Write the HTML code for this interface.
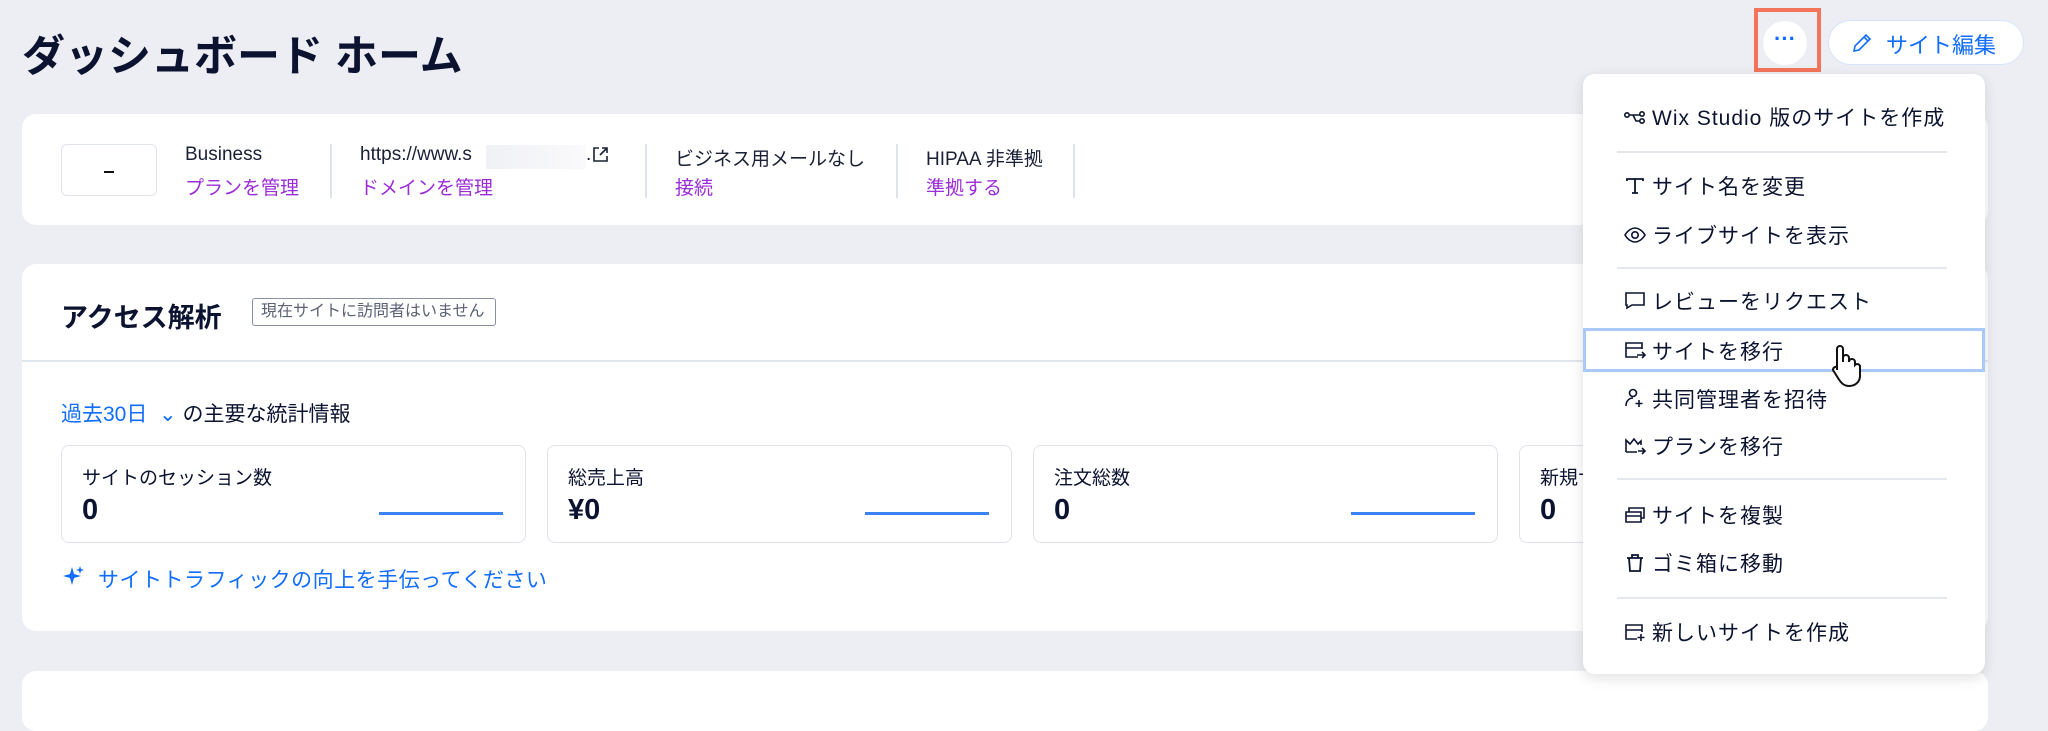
<!DOCTYPE html>
<html><head><meta charset="utf-8"><style>
*{margin:0;padding:0;box-sizing:border-box}
body{width:2048px;height:696px;background:#eceef3;font-family:"Liberation Sans","Noto Sans CJK JP",sans-serif;color:#0b1330;position:relative;overflow:hidden}
.a{position:absolute}
.card{position:absolute;background:#fff;border-radius:14px}
.lnk{color:#9b2dd8;font-size:19px}
.sm{font-size:19px;color:#1a2035}
.sep{position:absolute;top:144px;width:2px;height:54px;background:#dfe3ea}
.stat{position:absolute;top:445px;height:98px;border:1px solid #dfe3ea;border-radius:8px;background:#fff}
.stat .l{position:absolute;left:20px;top:17px;font-size:19px}
.stat .v{position:absolute;left:20px;top:48px;font-size:29px;font-weight:bold}
.stat .ln{position:absolute;right:22px;top:66px;width:124px;height:3px;background:#3b82f6}
.menu{position:absolute;left:1583px;top:74px;width:402px;height:600px;background:#fff;border-radius:12px;box-shadow:0 4px 14px rgba(0,0,0,.12)}
.mi{position:absolute;left:69px;font-size:21px;letter-spacing:1px;color:#0b1330;white-space:nowrap}
.ic{position:absolute;left:40px;width:24px;height:24px}
.dv{position:absolute;left:34px;width:330px;height:2px;background:#e4e7ec}
</style></head><body>
<div class="a" style="left:22px;top:22px;font-size:43px;font-weight:bold">ダッシュボード ホーム</div>
<div class="a" style="left:1754px;top:8px;width:67px;height:64px;border:4px solid #f2745a"></div>
<div class="a" style="left:1763px;top:21px;width:44px;height:44px;border-radius:50%;background:#fff;color:#116dff;text-align:center;font-size:22px;line-height:36px;font-weight:bold">···</div>
<div class="a" style="left:1828px;top:20px;width:196px;height:45px;border-radius:23px;background:#fff;border:1px solid #d6e4fb"></div>
<svg class="a" style="left:1851px;top:32px" width="22" height="22" viewBox="0 0 22 22" fill="none" stroke="#116dff" stroke-width="1.6"><path d="M3 19l1-5L15 3l4 4L8 18z M13 5l4 4"/></svg>
<div class="a" style="left:1886px;top:28px;font-size:22px;color:#116dff">サイト編集</div>

<div class="card" style="left:22px;top:114px;width:1966px;height:111px"></div>
<div class="a" style="left:61px;top:144px;width:96px;height:52px;border:1px solid #dfe3ea;border-radius:6px;background:#fff"></div>
<div class="a" style="left:104px;top:171px;width:10px;height:2px;background:#111"></div>
<div class="a sm" style="left:185px;top:144px">Business</div>
<div class="a lnk" style="left:185px;top:173px">プランを管理</div>
<div class="sep" style="left:330px"></div>
<div class="a sm" style="left:360px;top:144px">https://www.s</div>
<div class="a" style="left:486px;top:145px;width:100px;height:24px;background:linear-gradient(90deg,#f0f1f5,#fafafc)"></div>
<div class="a sm" style="left:586px;top:144px">.</div>
<svg class="a" style="left:592px;top:146px" width="17" height="17" viewBox="0 0 17 17" fill="none" stroke="#1a2035" stroke-width="1.6"><path d="M7 2H2v13h13v-5 M10 2h5v5 M15 2L8 9"/></svg>
<div class="a lnk" style="left:360px;top:173px">ドメインを管理</div>
<div class="sep" style="left:645px"></div>
<div class="a sm" style="left:675px;top:144px">ビジネス用メールなし</div>
<div class="a lnk" style="left:675px;top:173px">接続</div>
<div class="sep" style="left:896px"></div>
<div class="a sm" style="left:926px;top:144px">HIPAA 非準拠</div>
<div class="a lnk" style="left:926px;top:173px">準拠する</div>
<div class="sep" style="left:1073px"></div>

<div class="card" style="left:22px;top:264px;width:1966px;height:367px"></div>
<div class="a" style="left:61px;top:296px;font-size:27px;font-weight:bold">アクセス解析</div>
<div class="a" style="left:252px;top:298px;width:244px;height:28px;border:1.5px solid #8a90a3;border-radius:3px;font-size:16px;color:#5c6275;line-height:25px;padding-left:8px">現在サイトに訪問者はいません</div>
<div class="a" style="left:22px;top:360px;width:1966px;height:2px;background:#e1e5ee"></div>
<div class="a" style="left:61px;top:398px;font-size:21px"><span style="color:#116dff">過去30日 &nbsp;⌄</span> の主要な統計情報</div>
<div class="stat" style="left:61px;width:465px"><div class="l">サイトのセッション数</div><div class="v">0</div><div class="ln"></div></div>
<div class="stat" style="left:547px;width:465px"><div class="l">総売上高</div><div class="v">¥0</div><div class="ln"></div></div>
<div class="stat" style="left:1033px;width:465px"><div class="l">注文総数</div><div class="v">0</div><div class="ln"></div></div>
<div class="stat" style="left:1519px;width:465px"><div class="l">新規サ</div><div class="v">0</div></div>
<svg class="a" style="left:62px;top:564px" width="24" height="24" viewBox="0 0 24 24" fill="#116dff"><path d="M10 3l2 7 7 2-7 2-2 7-2-7-7-2 7-2z M18 2l1 3 3 1-3 1-1 3-1-3-3-1 3-1z"/></svg>
<div class="a" style="left:98px;top:564px;font-size:21px;letter-spacing:0.5px;color:#116dff">サイトトラフィックの向上を手伝ってください</div>

<div class="card" style="left:22px;top:671px;width:1966px;height:60px"></div>

<div class="menu">
<svg class="ic" style="top:32px" viewBox="0 0 24 24" fill="none" stroke="#0b1330" stroke-width="1.6"><circle cx="4" cy="9" r="2.2"/><circle cx="19" cy="8" r="2.2"/><circle cx="19" cy="15" r="2.2"/><path d="M6 9h4l3 6h4 M10 9h7"/></svg>
<div class="mi" style="top:28px">Wix Studio 版のサイトを作成</div>
<div class="dv" style="top:77px"></div>
<svg class="ic" style="top:100px" viewBox="0 0 24 24" fill="none" stroke="#0b1330" stroke-width="1.8"><path d="M4 7V5h16v2 M12 5v14 M9 19h6"/></svg>
<div class="mi" style="top:97px">サイト名を変更</div>
<svg class="ic" style="top:149px" viewBox="0 0 24 24" fill="none" stroke="#0b1330" stroke-width="1.6"><path d="M2 12c3-5 7-7 10-7s7 2 10 7c-3 5-7 7-10 7s-7-2-10-7z"/><circle cx="12" cy="12" r="3.2"/></svg>
<div class="mi" style="top:146px">ライブサイトを表示</div>
<div class="dv" style="top:193px"></div>
<svg class="ic" style="top:214px" viewBox="0 0 24 24" fill="none" stroke="#0b1330" stroke-width="1.6"><path d="M3 5h18v12H9l-5 3v-3H3z"/></svg>
<div class="mi" style="top:212px">レビューをリクエスト</div>
<div class="a" style="left:0;top:254px;width:402px;height:44px;border:3px solid #a9c9f8"></div>
<svg class="ic" style="top:264px" viewBox="0 0 24 24" fill="none" stroke="#0b1330" stroke-width="1.6"><path d="M15 19H3V5h16v6 M3 10h16 M14 17h8 M19 14l3 3-3 3"/></svg>
<div class="mi" style="top:262px">サイトを移行</div>
<svg class="a" style="left:245px;top:270px" width="34" height="44" viewBox="0 0 34 44" fill="#fff" stroke="#111" stroke-width="2"><path d="M9 26V5a3 3 0 016 0v13l0-4a3 3 0 016 0v4a3 3 0 016 0v3a3 3 0 015 1v10c0 6-5 10-11 10-5 0-8-3-11-8l-5-8a3 3 0 014-3z"/></svg>
<svg class="ic" style="top:312px" viewBox="0 0 24 24" fill="none" stroke="#0b1330" stroke-width="1.6"><circle cx="10" cy="7" r="3.5"/><path d="M3 20c0-5 3-8 7-8 M16 14v7 M12.5 17.5h7"/></svg>
<div class="mi" style="top:310px">共同管理者を招待</div>
<svg class="ic" style="top:360px" viewBox="0 0 24 24" fill="none" stroke="#0b1330" stroke-width="1.6"><path d="M3 18V6l4 4 4-5 4 5 3-3v4 M3 18h11 M15 17h7 M19 14l3 3-3 3"/></svg>
<div class="mi" style="top:357px">プランを移行</div>
<div class="dv" style="top:404px"></div>
<svg class="ic" style="top:429px" viewBox="0 0 24 24" fill="none" stroke="#0b1330" stroke-width="1.6"><path d="M3 9h15v10H3z M3 13h15 M6 9V5h15v10h-3"/></svg>
<div class="mi" style="top:426px">サイトを複製</div>
<svg class="ic" style="top:477px" viewBox="0 0 24 24" fill="none" stroke="#0b1330" stroke-width="1.8"><path d="M4 7h16 M9 7V4h6v3 M6 7l1 13h10l1-13"/></svg>
<div class="mi" style="top:474px">ゴミ箱に移動</div>
<div class="dv" style="top:523px"></div>
<svg class="ic" style="top:546px" viewBox="0 0 24 24" fill="none" stroke="#0b1330" stroke-width="1.6"><path d="M14 19H3V5h16v7 M3 10h16 M18 14v7 M14.5 17.5h7"/></svg>
<div class="mi" style="top:543px">新しいサイトを作成</div>
</div>
</body></html>
